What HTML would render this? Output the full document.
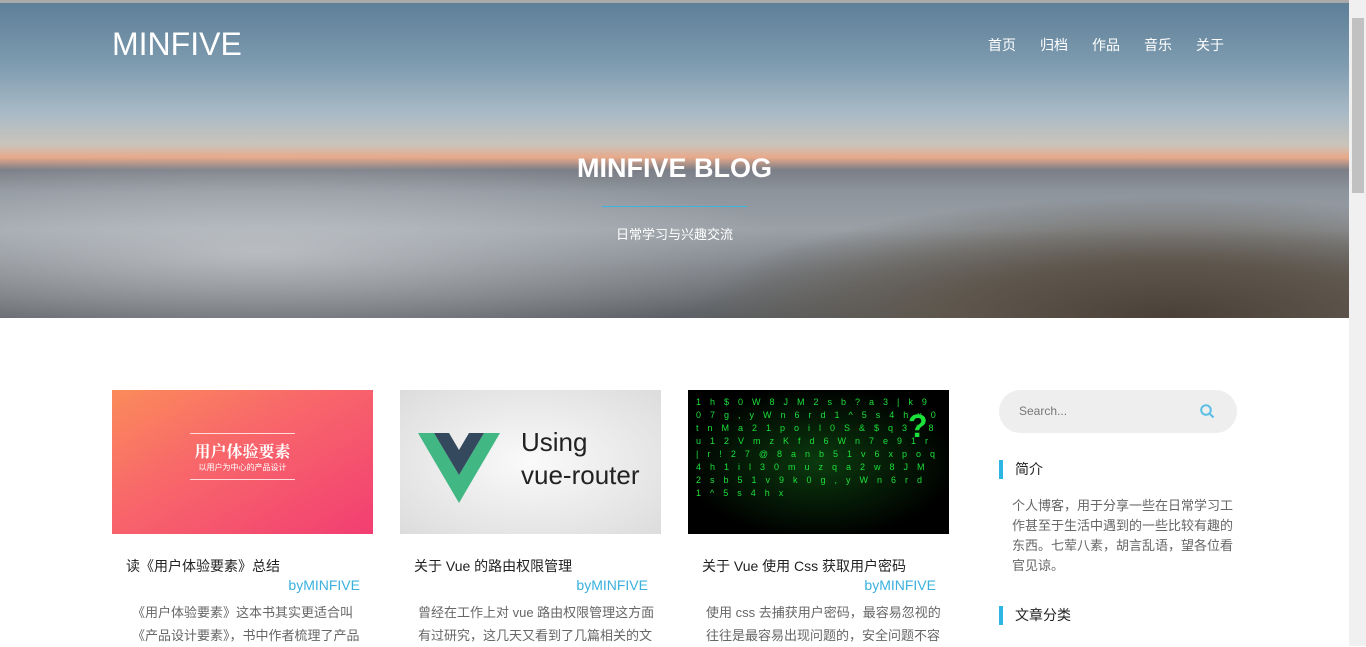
<!DOCTYPE html>
<html><head><meta charset="utf-8"><style>
*{margin:0;padding:0;box-sizing:border-box}
body{width:1366px;height:646px;overflow:hidden;background:#fff;font-family:"Liberation Sans","Noto Sans CJK SC",sans-serif;position:relative}
.topb{position:absolute;left:0;top:0;width:1349px;height:3px;background:#a9a9a9}
.hero{position:absolute;left:0;top:3px;width:1349px;height:315px;overflow:hidden;
background:linear-gradient(180deg,#5d7f98 0%,#7f9cb0 20%,#a9bac6 35%,#c9c4bb 45%,#e8a98a 49%,#7b7e86 53%,#8d949c 60%,#9aa0a6 72%,#7b7f84 85%,#5d6165 100%)}
.ground{position:absolute;left:650px;top:150px;width:800px;height:220px;background:radial-gradient(ellipse 60% 55% at 65% 75%,#4a4037 0%,#5e564c 45%,rgba(110,110,110,0) 100%)}
.cloud{position:absolute;left:-100px;top:150px;width:900px;height:200px;background:radial-gradient(ellipse at 40% 50%,rgba(205,208,212,.7),rgba(160,165,170,0) 70%)}
.logo{position:absolute;left:112px;top:23px;color:#fff;font-size:32px}
.nav{position:absolute;top:32px;right:125px;color:#fff;font-size:14px}
.nav span{margin-left:24px}
.ttl{position:absolute;top:150px;left:0;width:1349px;text-align:center;color:#fff;font-size:27px;font-weight:bold}
.line{position:absolute;top:203px;left:602px;width:145px;height:1px;background:#3ab4e0}
.sub{position:absolute;top:221px;left:0;width:1349px;text-align:center;color:#fff;font-size:13px}
.card{position:absolute;top:390px;width:261px}
.img{height:144px}
.t{margin:22px 0 0 14px;font-size:14px;color:#222;white-space:nowrap}
.by{text-align:right;margin-right:13px;color:#3ab0dc;font-size:14px;margin-top:1px}
.d{margin:8px 0 0 18px;color:#666;font-size:13px;line-height:23px;white-space:nowrap}
.search{position:absolute;left:999px;top:390px;width:238px;height:43px;border-radius:22px;background:#eee;color:#777;font-size:12px;padding:14px 20px}
.h{position:absolute;left:999px;border-left:4px solid #2db6e4;padding-left:12px;font-size:14px;color:#222;height:19px;line-height:19px}
.intro{position:absolute;left:1012px;top:496px;width:230px;font-size:13px;line-height:20px;color:#666;white-space:nowrap}
.sb{position:absolute;right:0;top:0;width:17px;height:646px;background:#f0f0f0}
.th{position:absolute;right:2px;top:18px;width:12px;height:175px;background:#c1c1c1}
</style></head><body>
<div class="hero"><div class="cloud"></div><div class="ground"></div>
<div class="logo">MINFIVE</div>
<div class="nav"><span>首页</span><span>归档</span><span>作品</span><span>音乐</span><span>关于</span></div>
<div class="ttl">MINFIVE BLOG</div><div class="line"></div>
<div class="sub">日常学习与兴趣交流</div></div>
<div class="topb"></div>

<div class="card" style="left:112px"><div class="img" style="background:linear-gradient(150deg,#fb8b5a 0%,#f8686a 40%,#f23e72 100%);position:relative">
<div style="position:absolute;left:78px;top:43px;width:105px;border-top:1px solid #fdd;border-bottom:1px solid #fdd;color:#fff;text-align:center;padding:5px 0 6px;white-space:nowrap"><div style="font-family:'Noto Serif CJK SC',serif;font-weight:bold;font-size:16px">用户体验要素</div><div style="font-size:8px">以用户为中心的产品设计</div></div></div>
<div class="t">读《用户体验要素》总结</div><div class="by">byMINFIVE</div><div class="d" style="margin-left:20px">《用户体验要素》这本书其实更适合叫<br>《产品设计要素》，书中作者梳理了产品</div></div>

<div class="card" style="left:400px"><div class="img" style="background:radial-gradient(ellipse at 50% 50%,#fafafa,#dcdcdc);position:relative">
<svg style="position:absolute;left:18px;top:43px" width="82" height="70" viewBox="0 0 82 70"><path d="M0 0H16L41 42L66 0H82L41 70Z" fill="#41b883"/><path d="M16 0H31L41 17L51 0H66L41 42Z" fill="#35495e"/></svg>
<div style="position:absolute;left:121px;top:36px;font-size:26px;color:#222;line-height:33px">Using<br>vue-router</div></div>
<div class="t">关于 Vue 的路由权限管理</div><div class="by">byMINFIVE</div><div class="d">曾经在工作上对 vue 路由权限管理这方面<br>有过研究，这几天又看到了几篇相关的文</div></div>

<div class="card" style="left:688px"><div class="img" style="background:radial-gradient(ellipse at 50% 50%,#0b3a0e,#000 75%);position:relative;overflow:hidden;color:#1ce03a;font-size:9px;line-height:13px;letter-spacing:9px;word-break:break-all">
<div style="padding:6px 4px 4px 8px">1h$0W8JM2sb?a3|k907g,yWn6rd1^5s4hx0tnMa21poil0S&amp;$q3*8u12VmzKfd6Wn7e91r|r!27@8anb51v6xpoq4h1il30muzqa2w8JM2sb51v9k0g,yWn6rd1^5s4hx</div>
<div style="position:absolute;left:220px;top:30px;font-size:32px;font-weight:bold;letter-spacing:0">?</div></div>
<div class="t">关于 Vue 使用 Css 获取用户密码</div><div class="by">byMINFIVE</div><div class="d">使用 css 去捕获用户密码，最容易忽视的<br>往往是最容易出现问题的，安全问题不容</div></div>

<div class="search">Search...<svg style="position:absolute;right:22px;top:14px" width="15" height="15" viewBox="0 0 15 15"><circle cx="6" cy="6" r="4.8" fill="none" stroke="#5cc0e6" stroke-width="2"/><path d="M9.5 9.5L13.5 13.5" stroke="#5cc0e6" stroke-width="2.2"/></svg></div>
<div class="h" style="top:460px">简介</div>
<div class="intro">个人博客，用于分享一些在日常学习工<br>作甚至于生活中遇到的一些比较有趣的<br>东西。七荤八素，胡言乱语，望各位看<br>官见谅。</div>
<div class="h" style="top:606px">文章分类</div>

<div class="sb"><div class="th"></div></div>
</body></html>
